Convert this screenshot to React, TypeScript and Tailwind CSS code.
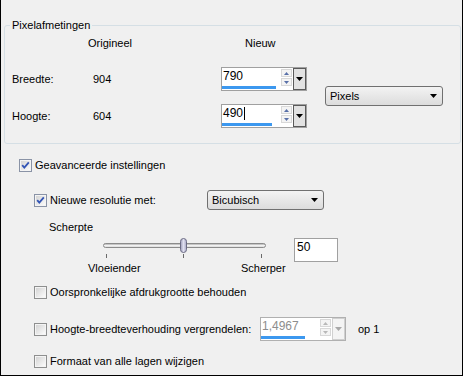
import React from 'react';

function Check({ checked }: { checked?: boolean }) {
  return (
    <svg width="13" height="13" viewBox="0 0 13 13" className="shrink-0">
      <defs>
        <linearGradient id="cbfill" x1="0" y1="0" x2="1" y2="1">
          <stop offset="0" stopColor="#d4d4d4" />
          <stop offset="1" stopColor="#fbfbfb" />
        </linearGradient>
      </defs>
      <rect x="0.5" y="0.5" width="12" height="12" fill="#f4f4f4" stroke={checked ? '#8a93a6' : '#8e8f8f'} />
      <rect x="2" y="2" width="9" height="9" fill="url(#cbfill)" />
      {checked && (
        <path d="M3.2 6.2 L5.3 8.6 L9.8 3.4" stroke="#3254b5" strokeWidth="1.8" fill="none" />
      )}
    </svg>
  );
}

function Arrow({ color = '#000' }: { color?: string }) {
  return (
    <svg width="7" height="4" viewBox="0 0 7 4">
      <path d="M0 0 H7 L3.5 4 Z" fill={color} />
    </svg>
  );
}

function NumField({ value, bar, caret, disabled }: { value: string; bar: string; caret?: boolean; disabled?: boolean }) {
  const arrow = disabled ? '#b8b8b8' : '#5870a8';
  return (
    <div className={`flex h-[24px] w-[86px] border ${disabled ? 'border-[#b0b0b0]' : 'border-[#a0a0a0]'} bg-white`}>
      <div className="flex flex-1 flex-col">
        <div className={`flex items-center pl-[1px] pt-[2px] text-[12px] leading-[13px] ${disabled ? 'text-[#8d8d8d]' : 'text-black'}`}>
          {value}
          {caret && <span className="ml-[1px] h-[13px] w-[1px] bg-black" />}
        </div>
        <div className={`mt-auto mb-[1px] h-[3px] bg-[#3c98ef] ${bar}`} />
      </div>
      <div className="mt-[1px] flex w-[11px] flex-col gap-[1px]">
        <div className="flex h-[8px] items-center justify-center border border-[#d8d8d8] bg-[#f4f4f4]">
          <svg width="5" height="3" viewBox="0 0 5 3"><path d="M0 3 H5 L2.5 0 Z" fill={arrow} /></svg>
        </div>
        <div className="flex h-[8px] items-center justify-center border border-[#d8d8d8] bg-[#f4f4f4]">
          <svg width="5" height="3" viewBox="0 0 5 3"><path d="M0 0 H5 L2.5 3 Z" fill={arrow} /></svg>
        </div>
      </div>
      <div className={`ml-[1px] flex w-[13px] items-center justify-center border ${disabled ? 'border-[#d0d0d0] bg-[#f4f4f4]' : 'border-[#5a5a5a] bg-[#e2e2e2]'}`}>
        <Arrow color={disabled ? '#a8a8a8' : '#000'} />
      </div>
    </div>
  );
}

function Select({ label, width }: { label: string; width: string }) {
  return (
    <div className={`flex h-[20px] items-center rounded-[3px] border border-[#707070] bg-gradient-to-b from-[#f3f3f3] to-[#dcdcdc] pl-[4px] pr-[5px] ${width}`}>
      <span className="flex-1">{label}</span>
      <Arrow />
    </div>
  );
}

function Slider() {
  return (
    <svg width="163" height="24" viewBox="0 0 163 24" className="shrink-0">
      <defs>
        <linearGradient id="trk" x1="0" y1="0" x2="0" y2="1">
          <stop offset="0" stopColor="#9a9a9a" />
          <stop offset="0.5" stopColor="#f2f2f2" />
          <stop offset="1" stopColor="#d6d6d6" />
        </linearGradient>
        <linearGradient id="thm" x1="0" y1="0" x2="1" y2="0">
          <stop offset="0" stopColor="#9c9cb8" />
          <stop offset="0.5" stopColor="#e0e0f0" />
          <stop offset="1" stopColor="#a8a8c4" />
        </linearGradient>
      </defs>
      <rect x="0.5" y="5.5" width="162" height="4" rx="2" fill="url(#trk)" stroke="#8c8c8c" />
      <rect x="77.5" y="0.5" width="6" height="14" rx="3" fill="url(#thm)" stroke="#6c6c84" />
      <rect x="3" y="16" width="1" height="4" fill="#6a6a6a" />
      <rect x="80" y="16" width="1" height="4" fill="#6a6a6a" />
      <rect x="158" y="16" width="1" height="4" fill="#6a6a6a" />
    </svg>
  );
}

export default function App() {
  return (
    <div className="h-[376px] w-[463px] overflow-hidden border-x border-b border-black bg-[#f0f0f0] font-['Liberation_Sans',Arial,sans-serif] text-[11px] leading-[13px] text-black">
      <fieldset className="ml-[3px] mr-[1px] mt-[19px] rounded-[3px] border border-[#d5dfe5] pb-[15px]">
        <legend className="ml-[5px] px-[2px]">Pixelafmetingen</legend>
        <div className="flex items-start">
          <div>
            <div className="mt-[5px] flex h-[13px]">
              <span className="w-[83px]" />
              <span className="w-[133px]">Origineel</span>
              <span className="w-[86px] pl-[24px]">Nieuw</span>
            </div>
            <div className="mt-[17px] flex h-[24px] items-center">
              <span className="w-[83px] pl-[7px]">Breedte:</span>
              <span className="w-[133px] pl-[5px]">904</span>
              <NumField value="790" bar="w-[54px]" />
            </div>
            <div className="mt-[13px] flex h-[24px] items-center">
              <span className="w-[83px] pl-[7px]">Hoogte:</span>
              <span className="w-[133px] pl-[5px]">604</span>
              <NumField value="490" bar="w-[50px]" caret />
            </div>
          </div>
          <div className="ml-[18px] mt-[54px]">
            <Select label="Pixels" width="w-[118px]" />
          </div>
        </div>
      </fieldset>

      <div className="ml-[18px] mt-[15px] flex h-[13px] items-center gap-[3px]">
        <Check checked />
        <span>Geavanceerde instellingen</span>
      </div>

      <div className="ml-[33px]">
        <div className="mt-[18px] flex h-[20px] items-center">
          <div className="flex w-[173px] items-center gap-[3px]">
            <Check checked />
            <span>Nieuwe resolutie met:</span>
          </div>
          <Select label="Bicubisch" width="w-[117px]" />
        </div>

        <div className="ml-[15px] mt-[11px] h-[13px]">Scherpte</div>

        <div className="mt-[4px] flex h-[24px]">
          <div className="ml-[69px]">
            <Slider />
          </div>
          <div className="ml-[28px] h-[24px] w-[44px] border border-[#a0a0a0] bg-white pl-[2px] pt-[2px] text-[12px]">50</div>
        </div>

        <div className="flex h-[13px]">
          <span className="ml-[54px] w-[153px]">Vloeiender</span>
          <span>Scherper</span>
        </div>

        <div className="mt-[11px] flex h-[13px] items-center gap-[3px]">
          <Check />
          <span>Oorspronkelijke afdrukgrootte behouden</span>
        </div>

        <div className="mt-[18px] flex h-[24px] items-center">
          <div className="flex w-[226px] items-center gap-[3px]">
            <Check />
            <span>Hoogte-breedteverhouding vergrendelen:</span>
          </div>
          <NumField value="1,4967" bar="w-[44px]" disabled />
          <span className="ml-[12px]">op 1</span>
        </div>

        <div className="mt-[14px] flex h-[13px] items-center gap-[3px]">
          <Check />
          <span>Formaat van alle lagen wijzigen</span>
        </div>
      </div>
    </div>
  );
}
